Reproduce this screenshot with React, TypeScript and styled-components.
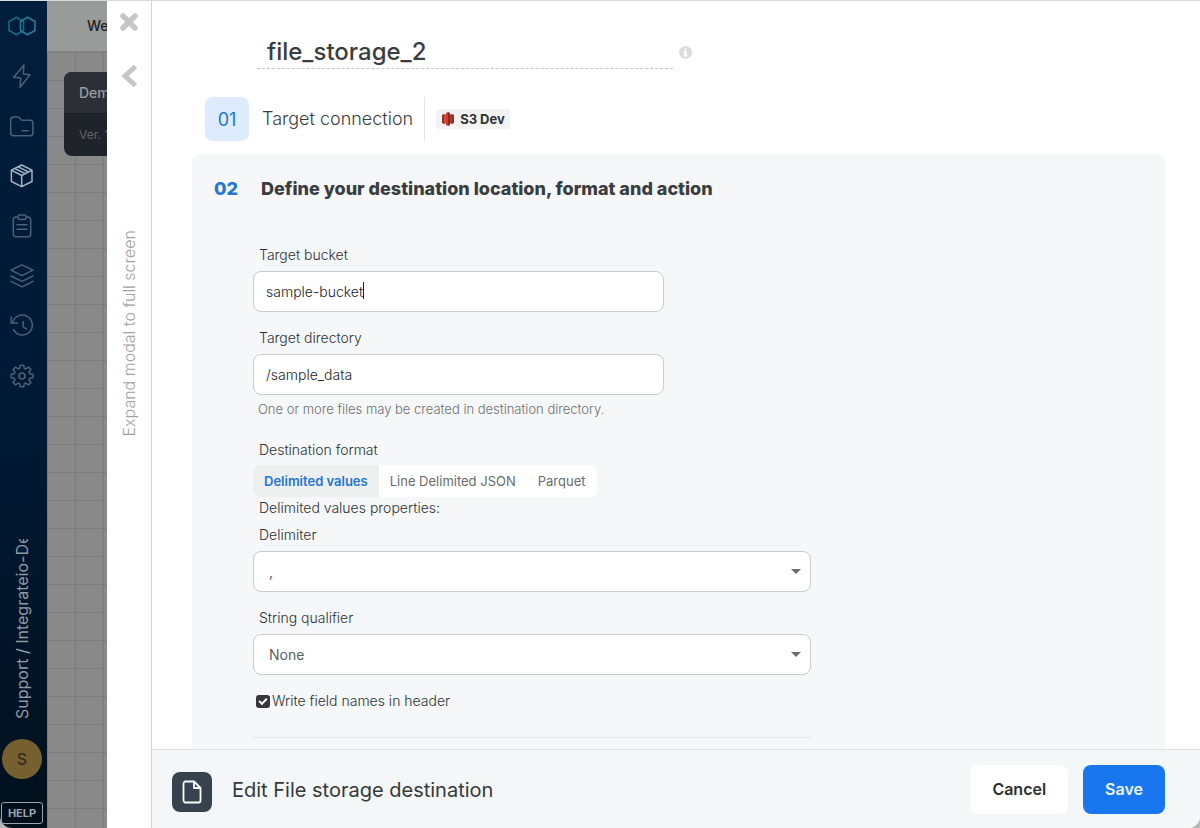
import React from "react";
import styled, { createGlobalStyle } from "styled-components";

const font = `Inter, "Liberation Sans", sans-serif`;

const GlobalStyle = createGlobalStyle`
  *, *::before, *::after { box-sizing: border-box; }
  body { margin: 0; background: #b4b6b8; font-family: ${font}; color: #3a3d3f; }
  button, input, select { font-family: inherit; }
`;

const Shell = styled.div`
  display: flex;
  height: 100vh;
  overflow: hidden;
  border-top: 1px solid #d9dbdb;
  border-radius: 0 0 12px 12px;
`;

const Sidebar = styled.nav`
  flex: none;
  width: 47px;
  display: flex;
  flex-direction: column;
  background: linear-gradient(#001d3b, #001a36 50%, #02101c);
  padding: 0 3px 4px 1px;
`;

const NavLink = styled.a<{ $active?: boolean }>`
  display: flex;
  align-items: center;
  justify-content: center;
  height: 50px;
  width: 42px;
  color: ${(p) => (p.$active ? "#a3b3c2" : "#4c6178")};
`;

const Account = styled.div`
  flex: none;
  margin-top: auto;
  height: 180px;
  width: 42px;
  overflow: hidden;
  writing-mode: vertical-rl;
  transform: rotate(180deg);
  font-size: 16px;
  line-height: 42px;
  white-space: nowrap;
  color: #8f9aa4;
`;

const Avatar = styled.div`
  flex: none;
  display: grid;
  place-items: center;
  width: 40px;
  height: 40px;
  margin: 20px 1px 23px;
  border-radius: 50%;
  background: #76602f;
  color: #2f2a20;
  font-size: 16px;
  font-weight: 500;
`;

const HelpButton = styled.button`
  flex: none;
  width: 42px;
  height: 22px;
  padding: 0;
  border: 1px solid #9aa3ab;
  border-radius: 3px;
  background: #02101c;
  color: #9aa3ab;
  font-size: 11px;
  font-weight: 700;
`;

const Workspace = styled.div`
  flex: none;
  width: 60px;
  display: flex;
  flex-direction: column;
  overflow: hidden;
`;

const WorkspaceHeader = styled.div`
  flex: none;
  height: 51px;
  padding-left: 40px;
  background: #999a9a;
  border-bottom: 1px solid #848484;
  font-size: 14px;
  font-weight: 500;
  line-height: 50px;
  color: #222;
`;

const Canvas = styled.div`
  flex: 1;
  padding: 20px 0 0 17px;
  background-color: #898989;
  background-image: linear-gradient(#7c7c7c 1px, transparent 1px),
    linear-gradient(90deg, #7c7c7c 1px, transparent 1px);
  background-size: 28px 28px;
`;

const NodeCard = styled.div`
  width: 160px;
  border-radius: 8px;
  overflow: hidden;
  background: #1f242b;
`;

const NodeTitle = styled.div`
  height: 42px;
  padding-left: 15px;
  background: #2c3036;
  border-bottom: 1px solid #1b1f25;
  font-size: 14px;
  font-weight: 500;
  line-height: 42px;
  color: #9b9c9e;
`;

const NodeVersion = styled.div`
  height: 42px;
  padding-left: 15px;
  font-size: 12px;
  line-height: 42px;
  color: #5f6368;
`;

const Handle = styled.aside`
  flex: none;
  width: 45px;
  display: flex;
  flex-direction: column;
  align-items: center;
  background: #fff;
  border-right: 1px solid #d3d6d7;
`;

const IconButton = styled.button`
  display: grid;
  place-items: center;
  width: 44px;
  height: 54px;
  padding: 0;
  border: 0;
  background: none;
  color: #c6c6c6;
  &:first-child { height: 42px; }
  &:nth-child(2) { height: 66px; }
`;

const ExpandButton = styled.button`
  writing-mode: vertical-rl;
  transform: rotate(180deg);
  margin-top: 121px;
  padding: 0;
  border: 0;
  background: none;
  font-size: 16px;
  font-weight: 300;
  line-height: 24px;
  color: #a2a2a2;
`;

const Modal = styled.main`
  flex: 1;
  min-width: 0;
  display: flex;
  flex-direction: column;
  background: #fff;
`;

const Body = styled.div`
  flex: 1;
  min-height: 0;
  overflow: hidden;
  padding: 34px 35px 0 40px;
`;

const NameRow = styled.div`
  display: flex;
  align-items: center;
  gap: 6px;
  padding-left: 65px;
  margin-bottom: 28px;
`;

const NameInput = styled.input`
  width: 416px;
  height: 34px;
  padding: 0 10px;
  border: 0;
  border-bottom: 1px dashed #c4c7c8;
  outline: 0;
  background: none;
  font-size: 24px;
  font-weight: 500;
  color: #3a3d3f;
`;

const StepRow = styled.section`
  display: flex;
  align-items: center;
  height: 44px;
  margin: 0 0 13px 13px;
`;

const StepBadge = styled.span`
  display: grid;
  place-items: center;
  width: 44px;
  height: 44px;
  border-radius: 8px;
  background: #deebfd;
  color: #2376d2;
  font-size: 18px;
`;

const StepTitle = styled.h2`
  margin: 0;
  height: 44px;
  padding: 0 11px 0 13px;
  border-right: 1px solid #e1e3e4;
  font-size: 18px;
  font-weight: 300;
  line-height: 44px;
  color: #3a3d3f;
`;

const ConnectionTag = styled.span`
  display: flex;
  align-items: center;
  gap: 6px;
  height: 20px;
  margin-left: 11px;
  padding: 0 5px 0 6px;
  border-radius: 3px;
  background: #f3f3f3;
  font-size: 13px;
  font-weight: 700;
  color: #333;
`;

const Panel = styled.section`
  min-height: 640px;
  border-radius: 8px;
  background: #f5f7f8;
  padding: 23px 24px 24px 22px;
`;

const PanelHeading = styled.div`
  display: flex;
  gap: 22px;
  margin-bottom: 44px;
  font-size: 18px;
  font-weight: 800;
  line-height: 24px;
`;

const PanelNumber = styled.span`
  width: 25px;
  color: #2376d2;
`;

const PanelTitle = styled.h2`
  margin: 0;
  font-size: inherit;
  font-weight: inherit;
`;

const Form = styled.form`
  display: flex;
  flex-direction: column;
  width: 100%;
  max-width: 558px;
  margin-left: 39px;
`;

const Label = styled.label`
  padding-left: 6px;
  font-size: 14px;
  font-weight: 300;
  line-height: 20px;
  color: #2f3234;
`;

const Caption = styled(Label).attrs({ as: "span" })`
  margin-bottom: 7px;
`;

const TextField = styled.div`
  position: relative;
  max-width: 411px;
  margin: 6px 0 16px;
`;

const TextInput = styled.input`
  display: block;
  width: 100%;
  height: 41px;
  padding: 0 12px;
  border: 1px solid #c9ccce;
  border-radius: 8px;
  outline: 0;
  background: #fff;
  font-size: 14px;
  font-weight: 300;
  color: #222527;
`;

const Caret = styled.span`
  position: absolute;
  left: 110px;
  top: 11px;
  width: 1px;
  height: 17px;
  background: #222;
`;

const Hint = styled.p`
  margin: -12px 0 21px;
  padding-left: 5px;
  font-size: 13px;
  line-height: 20px;
  font-weight: 300;
  color: #6d6f71;
`;

const Tabs = styled.div`
  display: flex;
  align-self: flex-start;
  height: 32px;
  margin: -2px 0 1px;
  border-radius: 7px;
  overflow: hidden;
  background: #fff;
`;

const Tab = styled.button<{ $active?: boolean }>`
  padding: 0 11px;
  border: 0;
  background: ${(p) => (p.$active ? "#eeefef" : "#fff")};
  color: ${(p) => (p.$active ? "#2376d2" : "#696b6d")};
  font-size: 13px;
  font-weight: ${(p) => (p.$active ? 600 : 400)};
`;

const SelectField = styled.div`
  display: grid;
  align-items: center;
  margin: 6px 0 16px;
  svg { grid-area: 1 / 1; justify-self: end; margin-right: 10px; pointer-events: none; }
`;

const Select = styled.select`
  grid-area: 1 / 1;
  appearance: none;
  width: 100%;
  height: 41px;
  padding: 0 15px;
  border: 1px solid #c9ccce;
  border-radius: 8px;
  background: #fff;
  font-size: 14px;
  color: #5c5f61;
`;

const CheckLabel = styled.label`
  display: flex;
  align-items: center;
  gap: 2px;
  padding-left: 3px;
  font-size: 14px;
  font-weight: 300;
  line-height: 20px;
  color: #2f3234;
`;

const Checkbox = styled.input`
  appearance: none;
  width: 14px;
  height: 13px;
  margin: 0;
  border-radius: 3px;
  background: #35383b;
  display: grid;
  place-items: center;
  &:checked::after {
    content: "";
    width: 8px;
    height: 5px;
    margin-top: -2px;
    border-left: 2px solid #fff;
    border-bottom: 2px solid #fff;
    transform: rotate(-45deg);
  }
`;

const Divider = styled.hr`
  width: 100%;
  margin: 26px 0 0;
  border: 0;
  border-top: 1px solid #e3e5e6;
`;

const Footer = styled.footer`
  flex: none;
  display: flex;
  align-items: center;
  height: 79px;
  padding: 0 35px 0 20px;
  border-top: 1px solid #dfe2e3;
  background: #f4f7f8;
`;

const FileBadge = styled.span`
  display: grid;
  place-items: center;
  width: 40px;
  height: 40px;
  margin: 6px 20px 0 0;
  border-radius: 8px;
  background: #38424e;
`;

const FooterTitle = styled.h1`
  flex: 1;
  margin: 2px 0 0;
  font-size: 20px;
  font-weight: 400;
  color: #36393b;
`;

const ActionButton = styled.button<{ $primary?: boolean }>`
  height: 49px;
  margin-left: 15px;
  padding: 0 22px;
  border: 0;
  border-radius: 8px;
  background: ${(p) => (p.$primary ? "#1877ee" : "#fff")};
  color: ${(p) => (p.$primary ? "#eef6ff" : "#2c2e30")};
  font-size: 16px;
  font-weight: 600;
`;

const Stroke = ({ children }: { children: React.ReactNode }) => (
  <svg width="24" height="24" viewBox="0 0 24 24" fill="none" stroke="currentColor" strokeWidth="1.5" strokeLinejoin="round" strokeLinecap="round">
    {children}
  </svg>
);

const gearPoints = Array.from({ length: 8 }, (_, i) =>
  [[-17, 8], [-9, 11], [9, 11], [17, 8]].map(([offset, radius]) => {
    const angle = ((i * 45 + offset) * Math.PI) / 180;
    return `${(12 + radius * Math.sin(angle)).toFixed(2)},${(12 - radius * Math.cos(angle)).toFixed(2)}`;
  }).join(" ")
).join(" ");

const navItems = [
  { label: "Jobs", art: <path d="M14 1 3.7 13.3l7 .7-.7 9.3L20 10.700l-6.700-.7z" /> },
  { label: "Files", art: <path d="M3.500 3h4.200c1 0 1.700.5 2.300 1.500.7 1.300 1.300 1.800 2.500 1.800H20a3 3 0 0 1 3 3v9.400a3 3 0 0 1-3 3H3.700a3 3 0 0 1-3-3V6a3 3 0 0 1 2.800-3zM12 16.700h6" /> },
  { label: "Packages", active: true, art: <path d="M11.700 1 22 6.200v11.300l-10.300 5.200-10.300-5.200V6.200zM1.400 6.200l10.300 5.300L22 6.200M11.700 11.500v11.200M8.200 2.800l10.300 5.200M4.800 4.500l10.300 5.200" /> },
  { label: "Schedules", art: <path d="M8 3H6a2.700 2.700 0 0 0-2.700 2.700V20A2.700 2.700 0 0 0 6 22.700h12a2.700 2.700 0 0 0 2.700-2.700V5.700A2.700 2.700 0 0 0 18 3h-2M9.500 1h5A1.500 1.500 0 0 1 16 2.500V4a1.500 1.500 0 0 1-1.500 1.500h-5A1.500 1.500 0 0 1 8 4V2.500A1.500 1.500 0 0 1 9.500 1zM7 10.700h10M7 15.300h10" /> },
  { label: "Clusters", art: <path d="m12 .800 11 5.400-11 5.500L1 6.200zM1 12l11 5.400L23 12M1 17.400l11 5.400 11-5.400" /> },
  { label: "History", art: <path d="M3.500 15.700A10 10 0 1 0 2.600 8.800L1.200 9M1.200 3v6h6.300M13.200 7.500v5.300l3.300 2" /> },
  { label: "Settings", art: <><polygon points={gearPoints} /><circle cx="12" cy="12" r="3" /></> },
];

export default function App() {
  return (
    <>
      <GlobalStyle />
      <Shell>
        <Sidebar aria-label="Main">
          <NavLink href="#" aria-label="Home">
            <svg width="28" height="20" viewBox="0 0 28 20" fill="none" strokeWidth="1.600" strokeLinejoin="round">
              <path d="M8.500 1.300 15.500 5.500v9l-7 4.200L1 14.500v-9z" stroke="#1b6880" />
              <path d="M19.500 1.300 27 5.500v9l-7.500 4.200-7-4.200v-9z" stroke="#2a7c9b" />
            </svg>
          </NavLink>
          {navItems.map((item) => (
            <NavLink key={item.label} href="#" aria-label={item.label} $active={item.active}>
              <Stroke>{item.art}</Stroke>
            </NavLink>
          ))}
          <Account>Support / Integrateio-De</Account>
          <Avatar>S</Avatar>
          <HelpButton>HELP</HelpButton>
        </Sidebar>

        <Workspace>
          <WorkspaceHeader>We</WorkspaceHeader>
          <Canvas>
            <NodeCard>
              <NodeTitle>Dem</NodeTitle>
              <NodeVersion>Ver. 1</NodeVersion>
            </NodeCard>
          </Canvas>
        </Workspace>

        <Handle>
          <IconButton aria-label="Close">
            <svg width="20" height="20" viewBox="0 0 20 20" stroke="currentColor" strokeWidth="5.500" strokeLinecap="round">
              <path d="m4 4 12 12M16 4 4 16" />
            </svg>
          </IconButton>
          <IconButton aria-label="Back">
            <svg width="18" height="24" viewBox="0 0 18 24" fill="none" stroke="currentColor" strokeWidth="5">
              <path d="M15.500 2.500 5 12l10.500 9.500" />
            </svg>
          </IconButton>
          <ExpandButton>Expand modal to full screen</ExpandButton>
        </Handle>

        <Modal>
          <Body>
            <NameRow>
              <NameInput aria-label="Component name" defaultValue="file_storage_2" />
              <svg width="13" height="13" viewBox="0 0 14 14" role="img" aria-label="Info">
                <circle cx="7" cy="7" r="7" fill="#dcdcdc" />
                <path d="M6 2.500h2.200v2H6zM5 5.500h3.200v4h1v1.700H5V9.500h1V7.200H5z" fill="#fff" />
              </svg>
            </NameRow>

            <StepRow>
              <StepBadge>01</StepBadge>
              <StepTitle>Target connection</StepTitle>
              <ConnectionTag>
                <svg width="12" height="14" viewBox="0 0 12 14">
                  <path d="M0 3 2 2v10l-2-1zM12 3l-2-1v10l2-1z" fill="#8c3123" />
                  <path d="M2 2 6 3v8l-4 1z" fill="#d9483a" />
                  <path d="m10 2-4 1v8l4 1z" fill="#b0382b" />
                  <path d="M4 1 6 0v14l-2-1z" fill="#c9402f" />
                  <path d="m8 1-2-1v14l2-1z" fill="#8c2a20" />
                </svg>
                S3 Dev
              </ConnectionTag>
            </StepRow>

            <Panel>
              <PanelHeading>
                <PanelNumber>02</PanelNumber>
                <PanelTitle>Define your destination location, format and action</PanelTitle>
              </PanelHeading>
              <Form onSubmit={(e) => e.preventDefault()}>
                <Label htmlFor="bucket">Target bucket</Label>
                <TextField>
                  <TextInput id="bucket" defaultValue="sample-bucket" />
                  <Caret />
                </TextField>
                <Label htmlFor="directory">Target directory</Label>
                <TextField>
                  <TextInput id="directory" defaultValue="/sample_data" />
                </TextField>
                <Hint>One or more files may be created in destination directory.</Hint>

                <Caption>Destination format</Caption>
                <Tabs>
                  <Tab type="button" $active>Delimited values</Tab>
                  <Tab type="button">Line Delimited JSON</Tab>
                  <Tab type="button">Parquet</Tab>
                </Tabs>
                <Caption>Delimited values properties:</Caption>
                <Label htmlFor="delimiter">Delimiter</Label>
                <SelectField>
                  <Select id="delimiter"><option>,</option></Select>
                  <svg width="10" height="5" viewBox="0 0 10 5"><path d="M0 0h10L5 5z" fill="#6b6e70" /></svg>
                </SelectField>
                <Label htmlFor="qualifier">String qualifier</Label>
                <SelectField>
                  <Select id="qualifier"><option>None</option></Select>
                  <svg width="10" height="5" viewBox="0 0 10 5"><path d="M0 0h10L5 5z" fill="#6b6e70" /></svg>
                </SelectField>
                <CheckLabel>
                  <Checkbox type="checkbox" defaultChecked />
                  Write field names in header
                </CheckLabel>
                <Divider />
              </Form>
            </Panel>
          </Body>

          <Footer>
            <FileBadge>
              <svg width="22" height="26" viewBox="0 0 22 26" fill="none" stroke="#fff" strokeWidth="1.800" strokeLinejoin="round">
                <path d="M4.500 2.500H13l6.500 6.500v12.500a2 2 0 0 1-2 2h-13a2 2 0 0 1-2-2v-17a2 2 0 0 1 2-2zM13 2.500V9h6.500" />
              </svg>
            </FileBadge>
            <FooterTitle>Edit File storage destination</FooterTitle>
            <ActionButton>Cancel</ActionButton>
            <ActionButton $primary>Save</ActionButton>
          </Footer>
        </Modal>
      </Shell>
    </>
  );
}
